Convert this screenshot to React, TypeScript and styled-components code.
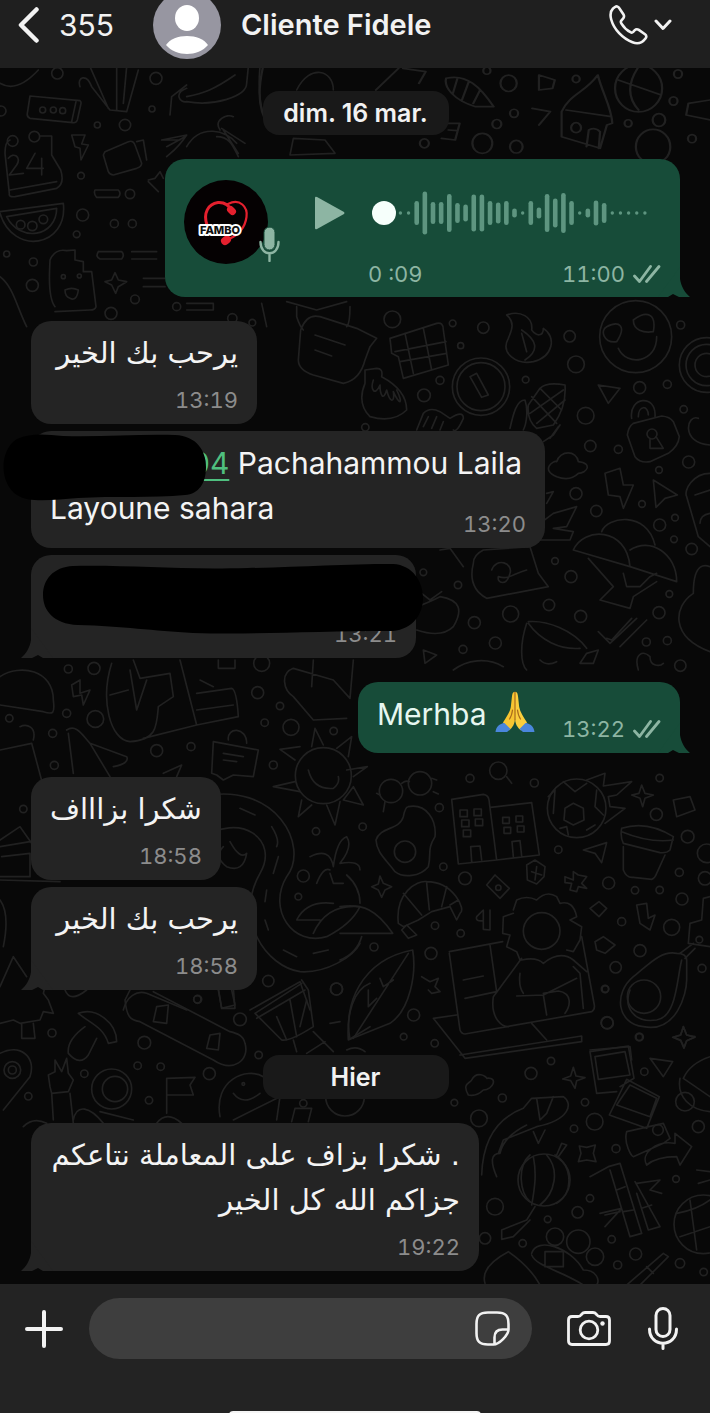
import React from "react";
import styled, { createGlobalStyle, css } from "styled-components";

const GlobalStyle = createGlobalStyle`
  *, *::before, *::after { box-sizing: border-box; }
  body {
    margin: 0;
    background: #232323;
    color: #f2f2f2;
    font-family: Inter, "DejaVu Sans", sans-serif;
  }
  button { border: 0; padding: 0; background: none; color: inherit; font: inherit; cursor: pointer; }
  svg { display: block; }
`;

const colors = {
  bar: "#1f1f1f",
  footer: "#232323",
  field: "#3e3e3e",
  chat: "#080808",
  doodle: "#212121",
  pill: "#191919",
  received: "#242424",
  sent: "#174c39",
  sentMuted: "#8db5a3",
  wave: "#5e9580",
  muted: "#8c8c8c",
};

/* ---------- layout ---------- */

const Screen = styled.div`
  min-height: 100vh;
  display: flex;
  flex-direction: column;
`;

const Header = styled.header`
  height: 68px;
  padding: 0 38px 18px 18px;
  display: flex;
  align-items: center;
  background: ${colors.bar};
  overflow: hidden;
`;

const BackButton = styled.button`
  display: flex;
  align-items: center;
  gap: 20px;
  flex: 0 0 135px;
  font-size: 30px;
  line-height: 36px;
`;

const Avatar = styled.div`
  flex: none;
  width: 68px;
  height: 68px;
  border-radius: 50%;
  overflow: hidden;
`;

const ContactName = styled.h1`
  flex: 1;
  margin: 0 0 0 20px;
  font-size: 29px;
  line-height: 36px;
  font-weight: 600;
  white-space: nowrap;
`;

const CallButton = styled.button`
  display: flex;
  align-items: center;
  gap: 6px;
`;

const Chat = styled.main`
  position: relative;
  flex: 1;
  display: flex;
  flex-direction: column;
  gap: 24px;
  padding: 23px 30px 12px 31px;
  background: ${colors.chat};
  overflow: hidden;
`;

const Wallpaper = styled.svg`
  position: absolute;
  inset: 0;
  width: 100%;
  height: 100%;
`;

const DatePill = styled.time<{ $spaced?: boolean }>`
  position: relative;
  align-self: center;
  min-width: 186px;
  margin-top: ${(p) => (p.$spaced ? 41 : 0)}px;
  padding: 0 19px;
  border-radius: 16px;
  background: ${colors.pill};
  font-size: 25px;
  line-height: 44px;
  font-weight: 600;
  text-align: center;
`;

const Group = styled.section<{ $sent?: boolean }>`
  position: relative;
  display: flex;
  flex-direction: column;
  align-items: ${(p) => (p.$sent ? "flex-end" : "flex-start")};
  gap: 7px;
`;

const layouts = {
  stacked: css`
    display: flex;
    flex-direction: column;
    gap: 10px;
  `,
  inline: css`
    display: flex;
    align-items: flex-end;
    gap: 27px;
    & > p { margin-bottom: 6px; }
  `,
  overlap: css`
    display: grid;
    & > p { grid-area: 1 / 1; margin-bottom: 7px; }
    & > footer { grid-area: 1 / 1; place-self: end; }
  `,
};

const Bubble = styled.article<{ $sent?: boolean; $layout?: keyof typeof layouts; $minWidth?: number }>`
  position: relative;
  max-width: 90%;
  min-width: ${(p) => p.$minWidth ?? 0}px;
  padding: 10px 19px;
  border-radius: 20px;
  background: ${(p) => (p.$sent ? colors.sent : colors.received)};
  color: ${(p) => (p.$sent ? "#e6f7f0" : "#f4f4f4")};
  ${(p) => layouts[p.$layout ?? "stacked"]}
`;

const Text = styled.p`
  margin: 0;
  font-size: 30px;
  line-height: 45px;
  white-space: nowrap;
`;

const ArabicText = styled(Text).attrs({ dir: "rtl", lang: "ar" })`
  font-family: "DejaVu Sans", sans-serif;
  font-size: 29px;
`;

const Meta = styled.footer<{ $sent?: boolean }>`
  display: flex;
  align-items: center;
  justify-content: flex-end;
  gap: 8px;
  font-size: 22px;
  line-height: 28px;
  font-variant-numeric: tabular-nums;
  color: ${(p) => (p.$sent ? colors.sentMuted : colors.muted)};
`;

const TailShape = styled.svg<{ $sent?: boolean }>`
  position: absolute;
  bottom: 0;
  ${(p) => (p.$sent ? "right: -10px;" : "left: -10px;")}
`;

const PhoneLink = styled.a`
  display: inline-block;
  padding-left: 141px;
  color: #4fbf7f;
  text-decoration: underline;
  text-decoration-thickness: 2px;
  text-underline-offset: 5px;
`;

const HiddenLine = styled.div`
  height: 45px;
`;

const Scribble = styled.svg<{ $x: number; $y: number }>`
  position: absolute;
  left: ${(p) => p.$x}px;
  top: ${(p) => p.$y}px;
`;

const Emoji = styled.svg`
  display: inline-block;
  margin-top: -4px;
  vertical-align: -8px;
`;

/* ---------- voice message ---------- */

const VoiceBubble = styled(Bubble)`
  display: flex;
  flex-direction: row;
  gap: 0;
  padding: 21px 19px 9px;
`;

const VoicePicture = styled.div`
  position: relative;
  flex: none;
  width: 84px;
  height: 84px;
  border-radius: 50%;
  background: #050102;
`;

const VoiceMic = styled.svg`
  position: absolute;
  right: -12px;
  bottom: 2px;
`;

const PlayButton = styled.button`
  width: 30px;
  height: 66px;
  margin: 0 23px 0 47px;
`;

const VoiceTrack = styled.div`
  width: 293px;
  display: flex;
  flex-direction: column;
  gap: 14px;
`;

const WaveRow = styled.div`
  display: grid;
  align-items: center;
  height: 66px;
  & > * { grid-area: 1 / 1; }
`;

const Seek = styled.input`
  appearance: none;
  width: 276px;
  height: 24px;
  margin: 0 0 0 4px;
  background: transparent;
  position: relative;
  &::-webkit-slider-thumb {
    appearance: none;
    width: 24px;
    height: 24px;
    border-radius: 50%;
    background: #f6fffb;
  }
`;

const VoiceMeta = styled(Meta)`
  justify-content: space-between;
`;

const Sent = styled.span`
  display: flex;
  align-items: center;
  gap: 8px;
`;

/* ---------- composer ---------- */

const Composer = styled.form`
  position: relative;
  display: flex;
  align-items: center;
  height: 129px;
  padding: 14px 32px 54px 25px;
  background: ${colors.footer};
  overflow: hidden;
`;

const Field = styled.div`
  flex: 1;
  min-width: 0;
  display: flex;
  align-items: center;
  height: 61px;
  margin: 0 35px 0 26px;
  padding: 0 22px 0 24px;
  border-radius: 31px;
  background: ${colors.field};
`;

const TextInput = styled.input`
  flex: 1;
  min-width: 0;
  border: 0;
  outline: 0;
  background: transparent;
  color: inherit;
  font: inherit;
  font-size: 28px;
`;

const IconButton = styled.button<{ $gap?: number }>`
  flex: none;
  margin-left: ${(p) => p.$gap ?? 0}px;
`;

const HomeIndicator = styled.span`
  position: absolute;
  left: 50%;
  bottom: -6px;
  width: 252px;
  height: 8px;
  border-radius: 4px;
  background: #f5f5f5;
  transform: translateX(-50%);
`;

/* ---------- drawings ---------- */

const Checks = () => (
  <svg width="28" height="20" viewBox="0 0 28 20" fill="none" stroke="currentColor" strokeWidth="2.800" strokeLinecap="round" strokeLinejoin="round">
    <path d="M1.500 12 6.500 17.500 17.500 2.500M13.500 17.500 26 2.500" />
  </svg>
);

const Tail = ({ sent }: { sent?: boolean }) => (
  <TailShape $sent={sent} width="32" height="30" viewBox="0 0 32 30" fill={sent ? colors.sent : colors.received}>
    {sent ? <path d="M22 0V12C23 19 27 26 32 30H21L15 27 10 30 0 30Z" /> : <path d="M10 0V12C9 19 5 26 0 30H11L17 27 22 30H32Z" />}
  </TailShape>
);

const bars = [3, 3, 24, 43, 22, 22, 38, 20, 17, 37, 37, 24, 21, 24, 9, 3, 24, 11, 38, 29, 40, 24, 3, 9, 25, 20, 3, 3, 3, 3, 3];

const Waveform = () => (
  <svg width="293" height="44" viewBox="0 0 293 44" fill={colors.wave}>
    {bars.map((h, i) => {
      const w = h === 3 ? 3.4 : 4.6;
      const tall = h === 3 ? 3.4 : h;
      return <rect key={i} x={32.4 + i * 8.15 - w / 2} y={22 - tall / 2} width={w} height={tall} rx={w / 2} />;
    })}
  </svg>
);

const FamboLogo = () => (
  <svg width="84" height="84" viewBox="0 0 84 84">
    <g fill="none" stroke="#e5202e" strokeLinecap="round">
      <path strokeWidth="3" d="M23 45C19 33 24 24 34 22.500 42 22 46 27 48 31" />
      <path strokeWidth="2.200" d="M44 24C56 18 64 27 62.500 37 61 48 54 55 45 59" />
      <path strokeWidth="7" d="M46.500 29.500 48.500 31.500" />
      <path strokeWidth="8" d="M41 61 43 59.500" />
    </g>
    <text x="36" y="54" textAnchor="middle" fontFamily="Inter, sans-serif" fontWeight="800" fontSize="11" fill="#111" stroke="#fff" strokeWidth="4" strokeLinejoin="round" paintOrder="stroke">FAMBO</text>
  </svg>
);

const PrayingHands = () => (
  <Emoji width="40" height="44" viewBox="0 0 40 44" role="img" aria-label="Mains jointes">
    <path fill="#f8c531" d="M20 3C18 2.500 17.200 4.500 16.900 8L15.800 18C15 23 11.500 28 8 33.500L14 41.500C17.500 38.500 20 35 20 29Z" />
    <path fill="#fbce3d" d="M20 3C22 2.500 22.800 4.500 23.100 8L24.200 18C25 23 28.500 28 32 33.500L26 41.500C22.500 38.500 20 35 20 29Z" />
    <path fill="#4a86dc" d="M.500 43C1 38 4.500 34.500 9.500 34L15.500 40 12 43ZM39.500 43C39 38 35.500 34.500 30.500 34L24.500 40 28 43Z" />
    <path fill="none" stroke="#a96b1d" strokeWidth="1.200" strokeLinecap="round" d="M20 3V31M17.500 21C17 25 16 28 14.500 30M22.500 21C23 25 24 28 25.500 30" />
  </Emoji>
);

type Dots = number[][];

const Sheet = ({ x, y, sx = 3, circles, d }: { x: number; y: number; sx?: number; circles: Dots; d: string }) => (
  <g transform={`translate(${x} ${y}) scale(${1 / sx} ${1 / 3})`}>
    <path d={d} />
    {circles.map(([cx, cy, r], i) => (
      <ellipse key={i} cx={cx} cy={cy} rx={r} ry={(r * 3) / sx} />
    ))}
  </g>
);

const ChatWallpaper = () => (
  <Wallpaper viewBox="0 68 710 1216" preserveAspectRatio="xMidYMin slice" aria-hidden="true" fill="none" stroke={colors.doodle} strokeWidth="5" strokeLinejoin="round" strokeLinecap="round">
    {/* calendar, watermelon, ice cream, palm */}
    <Sheet
      x={0}
      y={60}
      circles={[[172, 40, 17], [468, 55, 18], [456, 147, 9], [375, 195, 17], [292, 195, 9], [243, 347, 10], [390, 402, 14], [248, 465, 18], [343, 491, 12], [397, 491, 12], [230, 523, 10], [97, 676, 18], [100, 606, 12], [20, 582, 9], [405, 718, 13], [333, 760, 18], [530, 740, 12], [3, 153, 15], [38, 243, 16], [103, 230, 16], [62, 494, 13], [97, 498, 14], [130, 478, 13], [128, 150, 9], [160, 150, 9], [188, 152, 9], [190, 650, 6], [238, 648, 6], [697, 775, 14], [757, 788, 10]]}
      d="M90 108 240 122Q245 125 242 135L232 180Q228 190 218 188L90 175Q80 170 82 160ZM228 125 215 185M0 70Q50 100 115 30M240 80C230 50 260 40 275 80L330 150 380 155 415 30M350 20V150M380 20 370 130M270 20 325 145M510 165 515 110 560 75M560 85C520 100 540 130 560 125 640 140 740 110 740 70L745 20M560 110C610 100 640 90 705 45M780 20C770 130 790 190 830 220M890 90C930 10 1000 30 1000 90M120 228H155V285L182 330Q195 370 170 385L45 410Q25 412 28 400L15 280Q15 245 30 240M30 390 170 365M25 295C40 275 65 290 50 315L28 345 70 340M105 280 80 325H130M125 295V345M215 225 225 260 240 265 243 300 265 255 245 252 255 225ZM315 275 385 245Q400 240 405 255L425 310Q425 320 410 325L340 345Q330 345 325 335L310 285ZM410 245 430 240 440 300M285 390H355Q365 400 355 412H290Q280 402 285 390M0 455 190 430C205 560 40 590 0 460M20 470 170 445C170 530 60 550 20 470M445 360 465 355 480 335 490 355M445 365 475 395M165 740C140 710 150 620 150 600Q165 565 200 572L225 570 225 600 250 605 250 635 275 635 288 740Q285 750 270 750L165 755M195 690Q215 680 235 690 230 725 210 715 195 710 195 690M345 638 355 660 380 665 355 680 347 700 335 675 315 665 335 660ZM295 575H365Q375 585 365 597H300Q285 590 295 575M395 575H470M395 597H470M430 655H495M430 680H495M0 650C40 680 50 740 80 800M485 240 560 225C530 270 510 280 500 290M490 240 540 240M500 260 555 230M560 260C600 190 680 210 710 250M660 210C640 180 680 160 700 170M665 205 735 250M670 210 715 280M650 230C690 230 700 260 715 290M880 235 975 240 1005 280 870 285ZM560 730H640V750H560M785 730 800 800M860 725 950 750 1040 725"
    />
    {/* shell, ball, house */}
    <Sheet
      x={0}
      y={0}
      sx={2.208}
      circles={[[1123, 250, 18], [1410, 265, 52], [1272, 237, 8], [1135, 340, 9], [1097, 372, 10], [1455, 360, 14], [1387, 370, 8], [1497, 222, 9], [1075, 212, 8], [1487, 303, 9], [1442, 440, 38], [1528, 416, 9], [1272, 383, 11], [937, 430, 10], [1065, 430, 22], [1140, 440, 14]]}
      d="M985 235C1030 220 1060 260 1090 320L1050 320C1000 300 980 260 985 235M1010 235 1000 280M1035 245 1020 300M1060 270 1045 310M1190 225 1225 240 1220 265 1190 270ZM1250 330 1350 350M1240 335C1260 280 1290 280 1320 225 1330 280 1350 320 1352 370L1340 375 1325 445 1240 410ZM1295 440 1300 390Q1315 380 1325 395L1322 445M1410 200C1380 260 1390 300 1410 330M1365 240 1460 285M1175 325 1215 335 1190 375M985 370 1015 370 1005 420 975 415M990 390 1010 392M890 205 940 215 925 250M1568 300 1520 310 1515 345 1568 360M830 270 880 205M580 205C560 330 590 370 600 380"
    />
    {/* envelope, gift, flame, emoji, clock, corn, padlock, mushrooms, cup */}
    <Sheet
      x={340}
      y={310}
      circles={[[157, 28, 25], [338, 40, 10], [430, 53, 17], [362, 107, 9], [689, 79, 17], [708, 163, 25], [300, 211, 12], [252, 256, 19], [557, 209, 10], [423, 230, 86], [423, 230, 72], [737, 317, 25], [899, 233, 18], [982, 223, 12], [1031, 298, 11], [751, 408, 17], [835, 418, 12], [1046, 456, 18], [957, 480, 10], [708, 551, 18], [769, 603, 17], [906, 582, 10], [1005, 623, 10], [959, 645, 18], [1002, 688, 10], [1055, 717, 17], [645, 753, 10], [693, 800, 18], [354, 825, 11], [250, 787, 10], [627, 885, 17], [988, 852, 10], [722, 919, 18], [957, 908, 18], [512, 912, 24], [403, 938, 18], [466, 999, 18], [369, 1018, 12], [919, 996, 12], [982, 992, 12], [1021, 1067, 17], [1022, 45, 12], [887, 80, 108], [1100, 165, 82], [1100, 165, 62], [1100, 165, 35], [936, 372, 15], [76, 352, 11]]}
      d="M-130-10V20Q-120 50-110 60M-60 20 50 55 110 85 90 110 75 150Q60 210 10 220L-80 195Q-125 180-125 150L-118 60Q-100 10-60 20M-75 75 15 105M-75 120-25 138M30-10Q30 40 20 50M150 85 290 40Q310 35 310 60L325 165 190 205 175 140 155 130ZM165 125 318 95M195 70 220 190M250 55 275 180M180 155 320 130M75 180 110 175Q130 175 125 200 200 240 200 300 160 340 90 320 50 280 75 220ZM100 210C90 240 105 260 120 225 120 255 130 275 140 240 150 280 165 280 160 245 180 290 190 280 170 240M500 15C530 40 510 70 505 85 480 130 530 165 580 155 640 140 650 80 610 55 610 80 590 80 575 60 580 20 540 0 500 15M545 60C590 90 600 120 555 150M545 70 560 125M800 50C840 30 860 50 830 95 790 100 780 60 800 50M880 30C920 0 950 10 940 65 910 70 880 60 880 30M835 115C860 170 950 160 950 80M390 200 410 190 445 255 425 262ZM510 355C520 310 530 270 555 270 565 300 560 340 550 360M565 285 600 235Q620 215 675 225 680 290 640 345L590 355Q560 330 565 285M575 260 650 340M600 235 665 300M570 310 670 240M590 340 675 270M610 395 640 375 660 345M630 385 655 350M230 360 250 310Q270 290 300 305L330 325Q370 300 370 325 350 370 340 360M265 320 250 350M290 320 275 355M310 335 300 360M775 225 840 235 805 280ZM875 325C865 260 950 250 945 320M895 320C895 285 925 285 925 315M880 340 965 318Q990 320 1000 335L1018 380Q1015 410 985 430L930 455Q900 460 885 440L862 375Q865 350 880 340M930 385 930 415 970 415 948 380M1075 325C1040 310 1020 400 1110 405M650 500C600 480 640 450 650 455 660 420 710 420 715 455 760 460 740 490 715 490Q690 515 650 500M795 490 840 475 850 525 880 525 850 595 840 560 805 555ZM940 510 1012 555 975 565 948 592ZM620 550 640 545 620 580M600 640 640 610 710 590 680 650 640 655M600 690 690 690 700 665 640 655M1110 490C1060 490 1030 540 1040 560L1075 680 1110 710M1065 555 1110 540M1080 640Q1080 615 1110 610M785 665C800 620 920 600 945 705M700 720C730 650 860 650 870 770L700 720M870 720C930 680 1010 730 1010 815L870 770M745 745 820 830 780 870 870 895 880 860 950 815M850 790 860 830 900 830 930 800 950 790M400 760C390 800 395 840 440 865L625 830 595 790 570 710 430 720Q400 735 400 760M455 780C470 740 520 760 510 790 500 830 470 820 475 800 510 810 520 790 560 780M300 720 330 715 370 770M230 890C260 880 280 870 300 860 360 870 370 900 340 950 310 980 260 970 230 960M245 850 270 870 305 845M560 940C540 1000 540 1060 560 1080M565 935C620 930 700 960 740 1015M565 940C600 990 660 1020 720 1015M740 1030 775 1020 760 1060 720 1060ZM600 1050Q620 1070 650 1055M775 965 810 1000 890 925M840 1010 920 930M800 985 815 990 875 925M1110 770C1060 750 1060 830 1060 850 1000 890 990 980 1110 1025M895 1080C880 1030 910 1020 930 1040 930 1070 960 1070 970 1060M250 1020 290 1035 255 1060ZM340 1080C380 1050 440 1040 490 1070"
    />
    {/* glasses, egg, buildings, football, pot, croissant, laptop, avocado */}
    <Sheet
      x={340}
      y={760}
      circles={[[153, 93, 35], [240, 70, 35], [475, 32, 26], [390, 55, 12], [583, 69, 12], [298, 143, 12], [68, 200, 11], [195, 275, 32], [310, 320, 11], [375, 355, 19], [655, 269, 11], [710, 145, 88], [959, 54, 11], [949, 163, 18], [1043, 230, 19], [1018, 337, 12], [806, 369, 18], [885, 391, 11], [959, 390, 11], [1026, 417, 18], [475, 383, 8], [845, 485, 12], [995, 502, 24], [1078, 539, 10], [900, 572, 18], [827, 622, 17], [1086, 625, 12], [285, 497, 11], [362, 520, 11], [102, 561, 12], [273, 580, 18], [221, 765, 18], [191, 830, 10], [284, 850, 11], [795, 687, 11], [801, 788, 18], [897, 831, 11], [605, 513, 55], [912, 710, 50], [1100, 280, 28], [1095, 355, 20]]}
      d="M185 70Q198 60 208 65M275 55 290 60M280 95 295 102M120 105 110 100M135 125 130 155M500 50 515 70M20 30 82 20 40 50M10 120 40 80 70 135ZM205 140C260 130 290 180 285 230 260 270 275 280 265 320 240 350 190 355 165 335 140 300 110 280 108 240 120 200 180 210 190 170 195 145 200 140 205 140M335 118 430 103Q445 105 447 120L470 300 355 312ZM452 142 575 128 598 285 470 300M395 305 392 260 420 258 425 300M520 290 516 245 540 242 545 288M360 150H382V170H360ZM365 180H387V200H365ZM370 210H392V230H370ZM402 147H424V167H402ZM406 177H428V197H406ZM488 172H508V190H488ZM492 202H512V220H492ZM528 168H548V186H528ZM532 198H552V216H532ZM675 145 700 130 730 145 732 180 700 195 672 180ZM670 65 705 95 740 70M625 110 645 90 640 160M770 90 765 140 790 165M660 205 680 200 685 225M740 210 765 195M740 60 795 40 790 78 875 65 830 105 805 110 810 140 855 145 795 190M905 75 915 100 940 105 915 115 908 140 900 115 875 105 897 100ZM1000 120 1050 110 1065 150 1010 170ZM845 205Q920 180 1000 230L990 270Q980 280 960 278L850 250Q840 230 845 205M845 215Q930 250 1000 240M850 260V330Q860 355 880 352L935 358Q945 355 950 340L975 285M730 270 800 248 785 308 765 280ZM560 315 585 300 615 320 612 350 590 372 562 360ZM575 335 605 345M590 320 585 360M675 350 700 360 700 335 715 345 740 350 725 370 740 385 715 380 710 395 690 390 695 370 675 368ZM440 375 465 345 508 385 480 415ZM120 348 130 370 155 380 135 390 125 412 115 390 95 380 115 372ZM175 490C165 400 230 360 260 365 340 365 380 450 360 460L350 480 330 440 275 455 235 480 190 500ZM190 400 245 465M260 370 268 450M320 380 305 440M355 420 330 435M185 510 200 495 230 525 205 535ZM450 510 430 508 430 450 410 470Q405 485 430 482M450 450V510M520 450 530 420Q560 405 590 420 620 390 650 410L660 430Q700 420 710 470L690 480 725 500 720 540 700 575 680 570M520 460 490 470 488 520 510 525 500 560 530 575 540 600M750 445 777 425 800 445 777 470ZM890 435 920 430 925 475 945 465 930 510 900 490ZM765 545 790 530 825 555 795 580 770 570ZM1110 410 1090 415 1085 480 1050 490 1045 550 1110 560M328 575 488 545M328 580 360 810Q365 822 375 822L755 755Q765 750 763 735L725 530M450 555 470 695 375 715M370 660 430 648M545 595 460 710C450 780 490 800 505 800M545 600Q590 590 610 610 660 570 700 600L740 635M540 640Q535 680 550 700M530 708 610 705 710 655M610 705 620 765M610 700 655 693C700 700 690 740 675 760M700 620 720 640 730 745M350 765 280 775 375 895 725 845V828L360 885M575 790 620 840M1010 580C960 570 920 620 880 650 820 700 830 790 910 800 1010 820 1040 700 1040 660V600Q1040 580 1010 580M1025 600C1010 660 1010 770 950 780 880 790 850 740 870 690M1020 580 1060 550M1035 595 1065 565M1030 800 1040 825 1065 830 1040 842 1032 862 1022 840 1000 832 1022 825ZM218 570C230 640 210 750 150 790L30 838C10 740 60 600 218 570M205 580 40 835M85 690V740L110 715M120 655 130 680 160 660M245 650 270 665 295 655 285 680 300 695 275 700 265 690M0 440C70 430 110 450 158 520H0M20 345Q60 380 60 430M0 600Q50 580 65 530M750 870 870 860 875 900"
    />
    {/* taco, scissors, sun, note, road */}
    <Sheet
      x={0}
      y={660}
      circles={[[205, 27, 12], [282, 25, 18], [785, 10, 24], [773, 98, 18], [840, 138, 11], [200, 160, 12], [286, 177, 25], [28, 175, 11], [158, 220, 12], [163, 316, 12], [470, 272, 18], [573, 260, 12], [794, 188, 11], [873, 202, 24], [1001, 213, 11], [820, 315, 12], [970, 347, 84], [948, 514, 11], [70, 447, 11], [910, 648, 18], [895, 710, 10], [805, 963, 17], [1010, 987, 18], [593, 1018, 12]]}
      d="M0 50C60 10 160 30 160 120 165 160 160 165 130 155L0 135M215 75 240 60V100L270 90 250 135 245 105 220 110ZM335 10C300 120 330 240 390 245 470 240 470 200 475 140L520 110 510 40 420 55 400 0M330 105 385 90M390 30 410 150 440 60M540 0 590 195 430 235M590 100 695 85Q710 90 715 170L590 195M590 150 700 135M600 60 640 80M655 0V25H705V0M880 25C840 40 850 90 880 110L940 180 1040 175M880 25 1000 60 1050 115 1060 0M940 0 935 80M0 270 95 250 130 380M60 200C80 190 110 200 100 240M200 210C230 190 250 230 270 250L380 290Q390 310 340 320M205 220 220 340M270 250 330 350M490 340 545 315 530 350M640 245 775 270 760 350 700 345 670 360 650 345 635 340ZM685 240C680 200 740 200 740 250M670 280 730 290M670 300 710 305M900 260 840 268 885 300M885 365 820 380 900 395M905 420 895 470 935 435M980 435 1005 495 1020 425M935 260 945 205 970 255M1010 265 1055 230 1045 290M925 330Q940 390 1000 385 1020 370 1015 350M600 410C830 360 930 560 860 650 800 750 880 860 980 830 1020 810 1060 780 1080 740M600 540C720 450 840 540 780 640 700 780 800 920 900 935 980 940 1060 890 1080 850M720 445 765 465M815 500Q840 540 830 560M835 590 820 640M800 690 795 725M795 780 805 810M850 870 890 890M940 880 985 870M690 545Q720 600 740 580 730 640 680 620 640 590 670 560M930 590Q990 560 1000 620 1010 540 1040 530 1060 560 1020 610 1080 600 1080 630M950 670Q970 620 990 630M990 640 1000 670 1030 670M890 780H960M890 780Q920 720 1000 730M940 820Q980 730 1080 740M0 540 60 500 95 550M0 560 90 545M5 590 90 580V650H0M0 660 180 665M0 720Q30 760 10 860M0 980 40 890 80 950M370 1050C380 1010 410 990 440 1000L560 1050M655 985 665 1045H705L700 985M750 1050 900 965 930 1050"
    />
    {/* mushroom, skateboard, drum, flag */}
    <Sheet
      x={0}
      y={980}
      circles={[[156, 159, 12], [592, 58, 11], [433, 188, 19], [720, 118, 19], [1009, 27, 18], [413, 257, 11], [482, 260, 11], [776, 225, 11], [628, 281, 18], [447, 361, 11], [253, 281, 11], [85, 349, 11], [335, 327, 60], [345, 327, 38], [37, 270, 25], [37, 270, 12], [730, 312, 4], [910, 370, 11], [1035, 350, 58]]}
      d="M0 130 40 120 60 130 120 120 130 95 160 100 145 60 130 40 135 20M65 130V175H105L100 130M195 30Q210 70 260 30M235 100C290 80 350 130 350 185L325 190C310 140 270 130 235 100M255 140Q200 180 205 220 240 260 265 225L290 175M375 60C380 110 390 120 420 125L640 240C700 280 750 240 735 190 730 165 710 160 690 155L460 35M390 30 375 60M470 80 505 75 500 130 460 125ZM630 165 660 160 655 210 620 205ZM765 100 905 10M770 115 915 30M765 100 845 180Q870 185 940 140L925 30 905 0M830 110 860 180M870 60 890 170M920 60 900 140M880 180 890 215M940 155 1000 215M975 185 920 220M655 30 665 85 705 75 695 30M1110 10C1060 30 1040 100 1045 180L1110 140M0 220C60 190 110 230 90 290L10 390M150 320 145 285 165 275 165 240 185 275 200 235 205 280 220 300 205 335 155 340ZM155 340 160 420M210 340 220 430M500 400V295L585 292 570 315 580 345 500 345M660 410C640 300 740 260 790 290M700 340Q730 380 780 340M700 420 840 350 830 420M220 420C230 370 270 380 310 430M300 395 400 420M470 430Q500 390 545 430M875 425 885 385H935L925 425M990 130 1020 125M1040 210Q1070 195 1095 215M70 440Q100 410 140 430"
    />
    {/* clouds, photos, lantern, bamboo */}
    <Sheet
      x={450}
      y={980}
      circles={[[466, 27, 10], [472, 129, 18], [569, 171, 11], [303, 243, 11], [243, 280, 18], [157, 354, 12], [13, 368, 10], [87, 415, 25], [405, 367, 11], [434, 425, 25], [372, 446, 11], [583, 275, 11], [745, 440, 18], [624, 450, 16], [498, 506, 12], [282, 600, 78], [678, 597, 10], [135, 680, 25], [420, 655, 11], [383, 697, 17], [293, 718, 10], [105, 775, 17], [218, 790, 11], [315, 770, 26], [385, 785, 35], [435, 830, 26], [485, 778, 11], [557, 822, 18], [690, 850, 14], [503, 855, 12], [760, 733, 88], [705, 365, 28], [761, 876, 11]]}
      d="M700 140 710 165 735 172 710 182 702 205 692 182 668 172 692 165ZM370 262 378 288 405 293 380 302 375 325 362 302 338 297 362 288ZM420 215 535 198 552 295 510 320M420 215 440 340 500 335M435 230 525 215 540 285 445 298ZM530 298 628 350 590 445 478 405ZM540 315 620 355 600 410 500 375ZM600 235 668 245 640 290ZM55 345C35 310 60 310 65 300 80 270 110 290 110 295 145 290 130 330 100 330Q80 350 55 345M780 230Q720 250 700 295L780 350M690 295C680 350 720 390 780 395M95 585Q100 430 220 385L245 355 340 350C370 370 360 420 260 440L160 480 145 520M140 590Q110 520 150 520 160 470 230 435M260 355 270 420 290 400 310 350M250 455 265 490 285 450M320 525 335 490 350 495 325 530M388 498 410 502 436 495 430 520 438 545 410 540 385 545 393 520ZM245 675C255 620 260 580 250 530M290 525C330 570 315 640 270 675M315 525C370 560 370 640 320 670M240 525C200 560 210 640 240 665M255 680 230 720 155 750V778L190 770 240 720M420 590 475 560 510 550 575 760 540 770 480 570M500 630 525 620M520 695 550 690M450 700 515 685 465 740M465 705 510 695M555 605 630 740 595 750 560 640M560 610 630 600 600 630 635 640M575 685 605 675M530 455C520 490 545 530 550 530L640 490 660 475 640 430ZM590 555C570 520 620 480 675 490L675 460 725 500 690 555 680 530Q620 530 590 555M680 700Q740 690 780 660M690 770 780 740M720 660 740 810M740 570 780 575M745 610 780 600M245 820C260 770 360 800 400 870 440 870 450 900 440 915M245 825C260 860 330 870 400 915M285 815H340V860H285ZM105 910Q90 860 175 815 240 860 270 915M530 915 640 820 655 830 570 915M590 860 610 880"
    />
  </Wallpaper>
);

export default function App() {
  return (
    <Screen>
      <GlobalStyle />
      <Header>
        <BackButton type="button" aria-label="Retour, 355 messages non lus">
          <svg width="21" height="36" viewBox="0 0 21 36" fill="none" stroke="currentColor" strokeWidth="4.500" strokeLinecap="round" strokeLinejoin="round">
            <path d="M18.500 2.500 3 18 18.500 33.500" />
          </svg>
          355
        </BackButton>
        <Avatar>
          <svg width="68" height="68" viewBox="0 0 68 68">
            <rect width="68" height="68" fill="#9796a1" />
            <ellipse cx="34" cy="27" rx="12" ry="13" fill="#fff" />
            <path fill="#fff" d="M13 54C17 48 25 45 34 45S51 48 55 54C50 60 42 63 34 63S18 60 13 54Z" />
          </svg>
        </Avatar>
        <ContactName>Cliente Fidele</ContactName>
        <CallButton type="button" aria-label="Appeler">
          <svg width="39" height="40" viewBox="0 0 39 40" fill="none" stroke="currentColor" strokeWidth="2.600" strokeLinejoin="round">
            <path d="M4 3.500 6 2C7.500 1 9 1.200 10 2.800L14.500 9.500C15.500 11.200 15 12.500 14 13.700L12.300 15.600C11.600 16.500 11.700 17.300 12.300 18.300 14.500 22 18 25.300 21.500 27.200 22.500 27.800 23.400 27.700 24.200 26.900L25.800 25.200C27 24 28.300 23.900 29.800 24.900L36 29.300C37.600 30.500 37.700 32 36.500 33.500 33.500 37.500 29 39.500 23.500 37.300 13.500 33.500 5 24.500 2.200 14.500 1 10 1.500 6 4 3.500Z" />
          </svg>
          <svg width="18" height="12" viewBox="0 0 18 12" fill="none" stroke="currentColor" strokeWidth="3" strokeLinecap="round" strokeLinejoin="round">
            <path d="M2 2 9 9.500 16 2" />
          </svg>
        </CallButton>
      </Header>

      <Chat>
        <ChatWallpaper />
        <DatePill>dim. 16 mar.</DatePill>

        <Group $sent>
          <VoiceBubble $sent>
            <VoicePicture>
              <FamboLogo />
              <VoiceMic width="21" height="36" viewBox="0 0 21 36" fill="none" stroke={colors.sentMuted} strokeWidth="2.400" strokeLinecap="round">
                <rect x="5" y="1" width="11" height="23" rx="5.500" fill={colors.sentMuted} stroke={colors.sent} strokeWidth="1" />
                <path d="M1.500 16C1.500 31 19.500 31 19.500 16M10.500 28V35" />
              </VoiceMic>
            </VoicePicture>
            <PlayButton type="button" aria-label="Lire le message vocal">
              <svg width="30" height="34" viewBox="0 0 30 34" fill={colors.sentMuted}>
                <path d="M0 2Q0 0 2 1L29 16Q30 17 29 18L2 33Q0 34 0 32Z" />
              </svg>
            </PlayButton>
            <VoiceTrack>
              <WaveRow>
                <Waveform />
                <Seek type="range" min="0" max="9" defaultValue="0" aria-label="Position" />
              </WaveRow>
              <VoiceMeta $sent>
                <time>0 :09</time>
                <Sent>
                  <time>11:00</time>
                  <Checks />
                </Sent>
              </VoiceMeta>
            </VoiceTrack>
          </VoiceBubble>
          <Tail sent />
        </Group>

        <Group>
          <Bubble $minWidth={226}>
            <ArabicText>يرحب بك الخير</ArabicText>
            <Meta><time>13:19</time></Meta>
          </Bubble>
          <Bubble $layout="overlap" $minWidth={514}>
            <Text>
              <PhoneLink href="#">04</PhoneLink> Pachahammou Laila
              <br />
              Layoune sahara
            </Text>
            <Meta><time>13:20</time></Meta>
            <Scribble $x={-28} $y={2} width="206" height="68" viewBox="0 0 206 68" aria-hidden="true">
              <path d="M14 6C30-1 44 2 60 3 100 4 135 1 172 2 194 3 203 18 203 34S196 61 182 62C150 65 110 63 75 65 50 67 25 70 14 62-4 50-4 17 14 6Z" />
            </Scribble>
          </Bubble>
          <Bubble $minWidth={385}>
            <HiddenLine />
            <Meta><time>13:21</time></Meta>
            <Scribble $x={12} $y={9} width="382" height="70" viewBox="0 0 382 70" aria-hidden="true">
              <path d="M30 2C90 1 135 6 205 4 260 3 300 0 350 0 370 1 380 18 380 34S370 65 350 67C270 67 210 71 150 69 110 67 80 62 35 61 10 60 0 46 0 31S10 3 30 2Z" />
            </Scribble>
          </Bubble>
          <Tail />
        </Group>

        <Group $sent>
          <Bubble $sent $layout="inline">
            <Text>Merhba <PrayingHands /></Text>
            <Meta $sent>
              <time>13:22</time>
              <Checks />
            </Meta>
          </Bubble>
          <Tail sent />
        </Group>

        <Group>
          <Bubble>
            <ArabicText>شكرا بزاااف</ArabicText>
            <Meta><time>18:58</time></Meta>
          </Bubble>
          <Bubble $minWidth={226}>
            <ArabicText>يرحب بك الخير</ArabicText>
            <Meta><time>18:58</time></Meta>
          </Bubble>
          <Tail />
        </Group>

        <DatePill $spaced>Hier</DatePill>

        <Group>
          <Bubble $minWidth={448}>
            <ArabicText>
              . شكرا بزاف على المعاملة نتاعكم
              <br />
              جزاكم الله كل الخير
            </ArabicText>
            <Meta><time>19:22</time></Meta>
          </Bubble>
          <Tail />
        </Group>
      </Chat>

      <Composer onSubmit={(e) => e.preventDefault()}>
        <IconButton type="button" aria-label="Joindre">
          <svg width="38" height="38" viewBox="0 0 38 38" stroke="currentColor" strokeWidth="4" strokeLinecap="round">
            <path d="M19 2V36M2 19H36" />
          </svg>
        </IconButton>
        <Field>
          <TextInput type="text" aria-label="Message" />
          <IconButton type="button" aria-label="Autocollants">
            <svg width="35" height="35" viewBox="0 0 35 35" fill="none" stroke="currentColor" strokeWidth="2.600" strokeLinejoin="round">
              <path d="M33.500 18.500V13C33.500 4.500 30.500 1.500 22 1.500H13C4.500 1.500 1.500 4.500 1.500 13V22C1.500 30.500 4.500 33.500 13 33.500H18.500C24 33.500 33.500 24 33.500 18.500ZM33.500 18.500H27.500C22 18.500 19.500 21 19.500 26.500V33" />
            </svg>
          </IconButton>
        </Field>
        <IconButton type="button" aria-label="Appareil photo">
          <svg width="44" height="35" viewBox="0 0 44 35" fill="none" stroke="currentColor" strokeWidth="2.800" strokeLinejoin="round">
            <path d="M5 5.500H11Q13 5.500 14 4L15 2.800Q16 1.500 18 1.500H26Q28 1.500 29 2.800L30 4Q31 5.500 33 5.500H39Q42.500 5.500 42.500 9V30Q42.500 33.500 39 33.500H5Q1.500 33.500 1.500 30V9Q1.500 5.500 5 5.500Z" />
            <circle cx="22" cy="19" r="8.800" />
            <circle cx="35.500" cy="12.500" r="2.200" fill="currentColor" stroke="none" />
          </svg>
        </IconButton>
        <IconButton type="button" aria-label="Message vocal" $gap={37}>
          <svg width="30" height="43" viewBox="0 0 30 43" fill="none" stroke="currentColor" strokeWidth="3" strokeLinecap="round">
            <rect x="8" y="1.500" width="14" height="28" rx="7" />
            <path d="M1.500 22C1.500 41 28.500 41 28.500 22M15 36.500V41.500" />
          </svg>
        </IconButton>
        <HomeIndicator />
      </Composer>
    </Screen>
  );
}
